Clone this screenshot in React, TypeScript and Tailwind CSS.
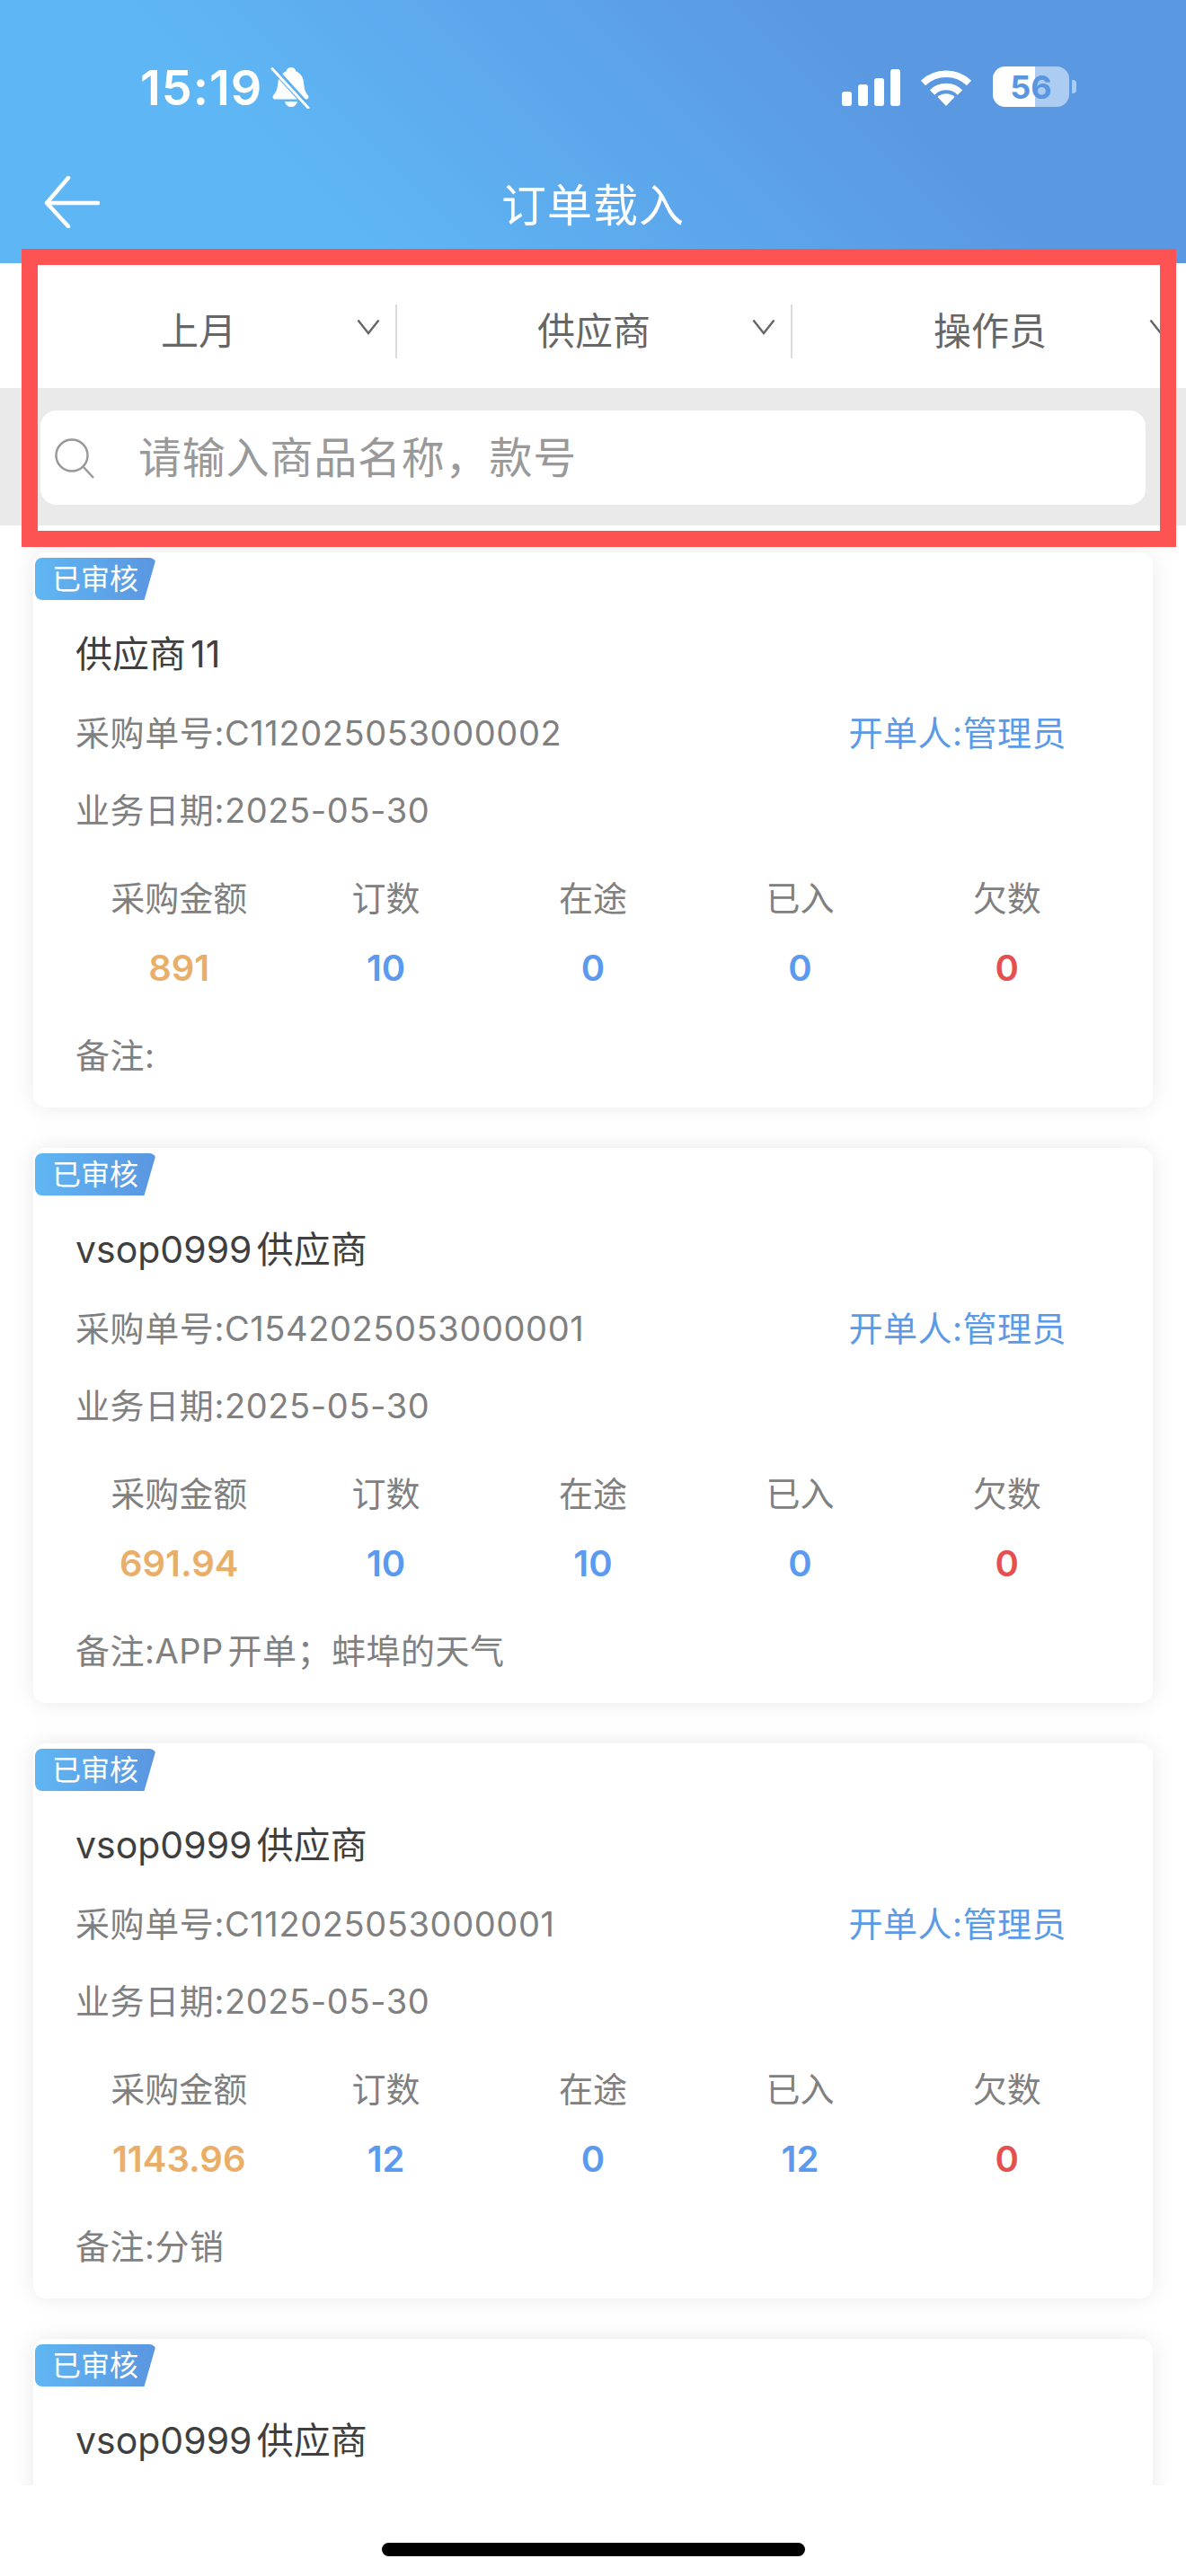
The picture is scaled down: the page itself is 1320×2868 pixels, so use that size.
type Order = {
  name: string;
  no: string;
  amount: string;
  ordered: number;
  transit: number;
  received: number;
  owed: number;
  note: string;
};

const orders: Order[] = [
  { name: "供应商11", no: "C112025053000002", amount: "891", ordered: 10, transit: 0, received: 0, owed: 0, note: "" },
  { name: "vsop0999供应商", no: "C1542025053000001", amount: "691.94", ordered: 10, transit: 10, received: 0, owed: 0, note: "APP开单；蚌埠的天气" },
  { name: "vsop0999供应商", no: "C112025053000001", amount: "1143.96", ordered: 12, transit: 0, received: 12, owed: 0, note: "分销" },
];

function Chevron() {
  return (
    <svg width="26" height="18" viewBox="0 0 26 18" fill="none" className="shrink-0 -mt-[10px]">
      <path d="M1.5 1.500 L13 16 L24.500 1.500" stroke="#666" strokeWidth="2.400" />
    </svg>
  );
}

function FilterCell({ label, last }: { label: string; last?: boolean }) {
  return (
    <div className="w-[440px] shrink-0 flex items-center">
      <span className="w-[397px] pl-[43px] text-center text-[42px] leading-[60px] text-[#666]">{label}</span>
      <Chevron />
      {!last && <div className="ml-[17px] w-[2px] h-[60px] bg-[#dcdcdc] shrink-0" />}
    </div>
  );
}

function Stat({ label, value, color }: { label: string; value: string | number; color: string }) {
  return (
    <div className="flex flex-col items-center">
      <span className="text-[38px] leading-[50px] text-[#808080]">{label}</span>
      <span className={`mt-[28px] text-[40px] leading-[50px] font-semibold ${color}`}>{value}</span>
    </div>
  );
}

function OrderCard({ name, order }: { name: string; order?: Order }) {
  return (
    <div className="relative h-[618px] shrink-0 mx-[37px] w-[1246px] rounded-[14px] bg-white shadow-[0_0_26px_rgba(0,0,0,0.09)] pt-[88px] px-[47px] [text-autospace:normal]">
      <div className="absolute left-[2px] top-[6px] w-[135px] h-[47px] rounded-l-[8px] rounded-tr-[8px] bg-linear-to-r from-[#60b6f3] to-[#5a96e0] [clip-path:polygon(0_0,100%_0,90%_100%,0_100%)] flex items-center pl-[19px] text-[32px] leading-none text-white">
        已审核
      </div>
      <div className="text-[41px] leading-[50px] text-[#3f3f3f]">{name}</div>
      {order && (
        <>
          <div className="mt-[38px] flex items-center justify-between text-[38px] leading-[50px] tracking-[0.6px] text-[#808080]">
            <span>采购单号:{order.no}</span>
            <span className="mr-[49px] tracking-[0.5px] text-[#5b9ae6]">开单人:管理员</span>
          </div>
          <div className="mt-[36px] text-[38px] leading-[50px] tracking-[0.6px] text-[#808080]">业务日期:2025-05-30</div>
          <div className="mt-[48px] grid grid-cols-5">
            <Stat label="采购金额" value={order.amount} color="text-[#e9ae69]" />
            <Stat label="订数" value={order.ordered} color="text-[#5b9aee]" />
            <Stat label="在途" value={order.transit} color="text-[#5b9aee]" />
            <Stat label="已入" value={order.received} color="text-[#5b9aee]" />
            <Stat label="欠数" value={order.owed} color="text-[#e4504f]" />
          </div>
          <div className="mt-[47px] text-[38px] leading-[50px] tracking-[0.5px] text-[#808080]">备注:{order.note}</div>
        </>
      )}
    </div>
  );
}

export default function App() {
  return (
    <div className="relative w-[1320px] h-[2868px] overflow-hidden bg-white flex flex-col font-['Inter','Noto_Sans_CJK_SC',sans-serif]">
      {/* header */}
      <div className="h-[293px] shrink-0 bg-[linear-gradient(45deg,#5fb6f4_27%,#5a98e2_74%)] text-white">
        <div className="h-[196px] relative">
          <span className="absolute left-[156px] top-[66px] text-[54px] leading-[64px] font-semibold tracking-[1px]">15:19</span>
          <svg className="absolute left-[301px] top-[74px]" width="44" height="47" viewBox="0 0 44 47">
            <path d="M23 1c3 0 5 2 5.500 4.500 5 2 8 6.500 8.500 12 .5 6 1 10 5 15 1 1.500 0 4-2 4H5c-2 0-3-2.500-2-4 4-5 5-9 5.500-15 .5-6 4-10 9-12C18 3 20 1 23 1z" fill="#fff" />
            <path d="M16 39h14c-1 4-4 6-7 6s-6-2-7-6z" fill="#fff" />
            <path d="M3 2 L43 46" stroke="#5db0ef" strokeWidth="7" />
            <path d="M2 2.500 L42 46" stroke="#fff" strokeWidth="3" strokeLinecap="round" />
          </svg>
          <svg className="absolute left-[937px] top-[76px]" width="66" height="42" viewBox="0 0 66 42" fill="#fff">
            <rect x="0" y="26" width="11" height="16" rx="3" />
            <rect x="18" y="18" width="11" height="24" rx="3" />
            <rect x="36" y="11" width="11" height="31" rx="3" />
            <rect x="54" y="1" width="11" height="41" rx="3" />
          </svg>
          <svg className="absolute left-[1024px] top-[75px]" width="58" height="43" viewBox="0 0 58 43" fill="none">
            <path d="M3.500 17.500 A37 37 0 0 1 54.500 17.500" stroke="#fff" strokeWidth="7.500" />
            <path d="M13.500 28 A22 22 0 0 1 44.500 28" stroke="#fff" strokeWidth="7.500" />
            <path d="M29 43 L19.500 33 A14 14 0 0 1 38.500 33 Z" fill="#fff" />
          </svg>
          <div className="absolute left-[1105px] top-[74px] w-[85px] h-[45px] rounded-[14px] overflow-hidden bg-white/50 flex">
            <div className="w-[47px] h-full bg-white" />
            <span className="absolute inset-0 flex items-center justify-center text-[36px] font-bold leading-none text-[#5a96e0]">56</span>
          </div>
          <div className="absolute left-[1193px] top-[89px] w-[5px] h-[15px] rounded-r-[4px] bg-white/50" />
        </div>
        <div className="relative h-[64px] flex items-center justify-center pt-[2px] text-[50px] leading-[64px] tracking-[1px]">
          <svg className="absolute left-[49px] top-[0px]" width="62" height="58" viewBox="0 0 62 58" fill="none">
            <path d="M60 30 H3 M27 2 L3 30 L27 56" stroke="#fff" strokeWidth="4.500" strokeLinecap="round" strokeLinejoin="round" />
          </svg>
          订单载入
        </div>
      </div>

      {/* filter row */}
      <div className="h-[139px] shrink-0 bg-white overflow-hidden flex items-center pt-[12px] pl-[2px]">
        <FilterCell label="上月" />
        <FilterCell label="供应商" />
        <FilterCell label="操作员" last />
      </div>

      {/* search */}
      <div className="h-[153px] shrink-0 bg-[#eaeaea] pl-[45px] pr-[45px] pt-[25px]">
        <div className="h-[105px] rounded-[18px] bg-white flex items-center pl-[15px]">
          <svg width="46" height="46" viewBox="0 0 46 46" fill="none" className="shrink-0">
            <circle cx="20" cy="20" r="17.500" stroke="#999" strokeWidth="2.500" />
            <path d="M32.500 32.500 L44 45" stroke="#999" strokeWidth="2.500" />
          </svg>
          <span className="ml-[48px] text-[48px] leading-[60px] tracking-[0.8px] text-[#999]">请输入商品名称，款号</span>
        </div>
      </div>

      {/* order list, the last card runs off the bottom */}
      <div className="flex-1 min-h-0 overflow-hidden flex flex-col gap-[45px] pt-[30px]">
        {orders.map((order, i) => (
          <OrderCard key={i} name={order.name} order={order} />
        ))}
        <OrderCard name="vsop0999供应商" />
      </div>

      {/* home indicator */}
      <div className="h-[101px] shrink-0 bg-white flex justify-center pt-[64px]">
        <div className="w-[471px] h-[15px] rounded-full bg-black" />
      </div>

      {/* annotation frame */}
      <div className="absolute left-[24px] top-[277px] w-[1285px] h-[332px] border-[18px] border-[#fd5353] pointer-events-none" />
    </div>
  );
}
